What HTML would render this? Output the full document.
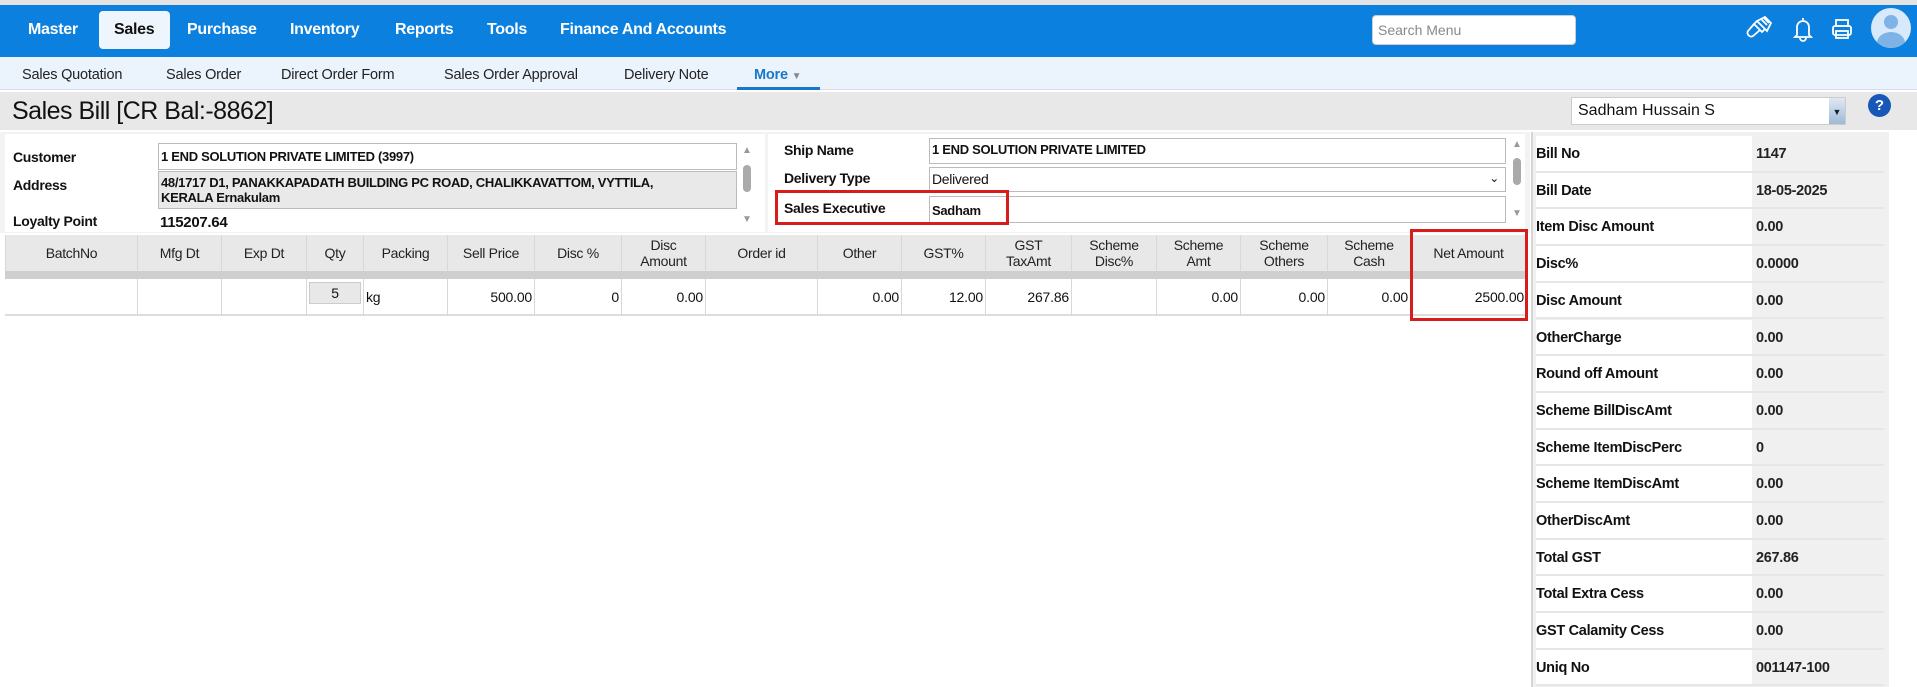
<!DOCTYPE html>
<html><head><meta charset="utf-8"><style>
*{box-sizing:border-box;margin:0;padding:0}
body{width:1917px;height:687px;overflow:hidden;background:#fff;font-family:"Liberation Sans",sans-serif;position:relative;color:#111}
.a{position:absolute}
.nav{left:0;top:5px;width:1917px;height:52px;background:#0b80df}
.ni{top:21px;color:#fff;font-weight:bold;font-size:16px;letter-spacing:-0.3px}
.sub{left:0;top:57px;width:1917px;height:33px;background:#ebf4fc;border-bottom:1px solid #d7dde3}
.si{top:67px;font-size:14.5px;color:#222;letter-spacing:-0.2px}
.lbl{font-size:14px;font-weight:bold;letter-spacing:-0.3px}
.inp{background:#fff;border:1px solid #bbb;font-size:13px;font-weight:bold;padding:3px 2px;letter-spacing:-0.3px}
.th{top:235px;left:5px;height:36px;width:1521px;background:#e8e8e8}
.hc{position:absolute;top:235px;height:36px;display:flex;align-items:center;justify-content:center;text-align:center;font-size:14px;line-height:16px;color:#222;border-left:1px solid #d8d8d8;letter-spacing:-0.3px}
.dc{position:absolute;top:279px;height:36px;display:flex;align-items:center;justify-content:flex-end;padding-right:2px;font-size:14px;border-left:1px solid #d8d8d8;letter-spacing:-0.2px}
.rp{left:1531px;top:132px;width:358px;height:555px;background:#f0f0f0;border-left:2px solid #d6d6d6}
.row{position:absolute;left:1536px;width:348px;height:36.7px;border-bottom:2px solid #e6e6e6;font-size:14.5px;font-weight:bold;letter-spacing:-0.3px}
.row span{position:absolute;top:10px}
.row .l{left:0;width:216px;height:100%;background:#fff;top:0;padding-top:10px}
.row .v{left:220px;font-weight:bold;color:#222}
</style></head><body>
<div class="a" style="left:0;top:0;width:1917px;height:5px;background:#e3e3e3"></div>
<div class="a nav"></div>
<div class="a" style="left:99px;top:11px;width:71px;height:38px;background:#eef5fc;border-radius:4px"></div>
<div class="a ni" style="left:28px">Master</div>
<div class="a ni" style="left:114px;color:#111">Sales</div>
<div class="a ni" style="left:187px">Purchase</div>
<div class="a ni" style="left:290px">Inventory</div>
<div class="a ni" style="left:395px">Reports</div>
<div class="a ni" style="left:487px">Tools</div>
<div class="a ni" style="left:560px">Finance And Accounts</div>
<div class="a" style="left:1372px;top:15px;width:204px;height:30px;background:#fff;border-radius:4px;border:1px solid #ccc;font-size:14px;color:#888;padding:6px 5px">Search Menu</div>
<svg class="a" style="left:1745px;top:15px" width="28" height="28" viewBox="0 0 28 28" fill="none" stroke="#fff" stroke-width="1.8"><path d="M12 6l8-4 6 6-4 8zM12 6l10 10M16 4l6 6M19 3l5 5M12 6l-3 3 8 8 3-3M9 9l-6 7c-2 3 2 7 5 5l7-6"/></svg>
<svg class="a" style="left:1791px;top:15px" width="24" height="28" viewBox="0 0 24 28" fill="none" stroke="#fff" stroke-width="1.8"><path d="M12 3v2M6 20V12a6 6 0 0 1 12 0v8l2 2H4zM9 23a3 3 0 0 0 6 0"/></svg>
<svg class="a" style="left:1830px;top:17px" width="24" height="24" viewBox="0 0 24 24" fill="none" stroke="#fff" stroke-width="1.8"><rect x="6" y="3" width="12" height="6"/><rect x="3" y="9" width="18" height="9" rx="2"/><rect x="6" y="14" width="12" height="7"/></svg>
<div class="a" style="left:1871px;top:8px;width:40px;height:40px;border-radius:50%;background:#d7e9fa;overflow:hidden"><div class="a" style="left:13px;top:7px;width:14px;height:14px;border-radius:50%;background:#7fb3e6"></div><div class="a" style="left:6px;top:24px;width:28px;height:22px;border-radius:50%;background:#7fb3e6"></div></div>
<div class="a sub"></div>
<div class="a si" style="left:22px">Sales Quotation</div>
<div class="a si" style="left:166px">Sales Order</div>
<div class="a si" style="left:281px">Direct Order Form</div>
<div class="a si" style="left:444px">Sales Order Approval</div>
<div class="a si" style="left:624px">Delivery Note</div>
<div class="a si" style="left:754px;color:#1a78c9;font-weight:bold">More <span style="font-size:10px;color:#888">▼</span></div>
<div class="a" style="left:737px;top:87px;width:83px;height:3px;background:#1a78c9"></div>
<div class="a" style="left:0;top:92px;width:1917px;height:38px;background:#e8e8e8"></div>
<div class="a" style="left:12px;top:97px;font-size:25px;color:#111;letter-spacing:-0.5px">Sales Bill [CR Bal:-8862]</div>
<div class="a" style="left:1571px;top:97px;width:275px;height:28px;background:#fff;border:1px solid #ccc;font-size:16px;padding:4px 6px">Sadham Hussain S</div>
<div class="a" style="left:1829px;top:98px;width:16px;height:26px;background:linear-gradient(#dfe9f3,#9dbad6);font-size:9px;text-align:center;padding-top:9px;color:#123">▼</div>
<div class="a" style="left:1868px;top:94px;width:23px;height:23px;border-radius:50%;background:#1657b8;color:#fff;font-weight:bold;font-size:15px;text-align:center;line-height:23px">?</div>
<div class="a" style="left:0;top:132px;width:1530px;height:101px;background:#f3f3f3"></div>
<div class="a" style="left:5px;top:134px;width:760px;height:98px;background:#fff"></div>
<div class="a lbl" style="left:13px;top:149px">Customer</div>
<div class="a lbl" style="left:13px;top:177px">Address</div>
<div class="a lbl" style="left:13px;top:213px">Loyalty Point</div>
<div class="a inp" style="left:158px;top:143px;width:579px;height:27px;padding-top:5px">1 END SOLUTION PRIVATE LIMITED (3997)</div>
<div class="a inp" style="left:158px;top:171px;width:579px;height:38px;background:#e9e9e9;line-height:15px;padding-top:3px">48/1717 D1, PANAKKAPADATH BUILDING PC ROAD, CHALIKKAVATTOM, VYTTILA,<br>KERALA Ernakulam</div>
<div class="a" style="left:160px;top:214px;font-size:15px;font-weight:bold;letter-spacing:-0.3px">115207.64</div>
<div class="a" style="left:742px;top:145px;font-size:10px;color:#999">▲</div>
<div class="a" style="left:743px;top:165px;width:8px;height:27px;border-radius:4px;background:#aaa"></div>
<div class="a" style="left:742px;top:214px;font-size:10px;color:#999">▼</div>
<div class="a" style="left:768px;top:134px;width:757px;height:98px;background:#fff"></div>
<div class="a lbl" style="left:784px;top:142px">Ship Name</div>
<div class="a lbl" style="left:784px;top:170px">Delivery Type</div>
<div class="a lbl" style="left:784px;top:200px">Sales Executive</div>
<div class="a inp" style="left:929px;top:138px;width:577px;height:26px">1 END SOLUTION PRIVATE LIMITED</div>
<div class="a inp" style="left:929px;top:167px;width:577px;height:25px;font-weight:normal;font-size:14px">Delivered<span style="position:absolute;right:6px;top:3px;font-size:12px">⌄</span></div>
<div class="a inp" style="left:929px;top:196px;width:577px;height:27px;padding-top:6px">Sadham</div>
<div class="a" style="left:775px;top:190px;width:234px;height:35px;border:3px solid #d71c1c"></div>
<div class="a" style="left:1512px;top:139px;font-size:10px;color:#999">▲</div>
<div class="a" style="left:1513px;top:158px;width:8px;height:27px;border-radius:4px;background:#aaa"></div>
<div class="a" style="left:1512px;top:208px;font-size:10px;color:#999">▼</div>
<div class="a th"></div>
<div class="a" style="left:5px;top:271px;width:1521px;height:8px;background:#cfcfcf"></div>
<div class="a" style="left:5px;top:314px;width:1521px;height:2px;background:#ddd"></div>
<div class="hc" style="left:5px;width:132px">BatchNo</div>
<div class="hc" style="left:137px;width:84px">Mfg Dt</div>
<div class="hc" style="left:221px;width:85px">Exp Dt</div>
<div class="hc" style="left:306px;width:57px">Qty</div>
<div class="hc" style="left:363px;width:84px">Packing</div>
<div class="hc" style="left:447px;width:87px">Sell Price</div>
<div class="hc" style="left:534px;width:87px">Disc %</div>
<div class="hc" style="left:621px;width:84px">Disc<br>Amount</div>
<div class="hc" style="left:705px;width:112px">Order id</div>
<div class="hc" style="left:817px;width:84px">Other</div>
<div class="hc" style="left:901px;width:84px">GST%</div>
<div class="hc" style="left:985px;width:86px">GST<br>TaxAmt</div>
<div class="hc" style="left:1071px;width:85px">Scheme<br>Disc%</div>
<div class="hc" style="left:1156px;width:84px">Scheme<br>Amt</div>
<div class="hc" style="left:1240px;width:87px">Scheme<br>Others</div>
<div class="hc" style="left:1327px;width:83px">Scheme<br>Cash</div>
<div class="hc" style="left:1410px;width:116px">Net Amount</div>
<div class="dc" style="left:5px;width:132px;border:0"></div>
<div class="dc" style="left:137px;width:84px"></div>
<div class="dc" style="left:221px;width:85px"></div>
<div class="dc" style="left:306px;width:57px"><div style="width:52px;height:22px;background:#e8e8e8;border:1px solid #ccc;text-align:center;margin-top:-8px;padding-top:2px">5</div></div>
<div class="dc" style="left:363px;width:84px;justify-content:flex-start;padding-left:2px">kg</div>
<div class="dc" style="left:447px;width:87px">500.00</div>
<div class="dc" style="left:534px;width:87px">0</div>
<div class="dc" style="left:621px;width:84px">0.00</div>
<div class="dc" style="left:705px;width:112px"></div>
<div class="dc" style="left:817px;width:84px">0.00</div>
<div class="dc" style="left:901px;width:84px">12.00</div>
<div class="dc" style="left:985px;width:86px">267.86</div>
<div class="dc" style="left:1071px;width:85px"></div>
<div class="dc" style="left:1156px;width:84px">0.00</div>
<div class="dc" style="left:1240px;width:87px">0.00</div>
<div class="dc" style="left:1327px;width:83px">0.00</div>
<div class="dc" style="left:1410px;width:116px">2500.00</div>
<div class="a" style="left:1410px;top:229px;width:118px;height:92px;border:3px solid #d71c1c"></div>
<div class="a rp"></div>
<div class="row" style="top:136px"><span class="l">Bill No</span><span class="v">1147</span></div>
<div class="row" style="top:172.7px"><span class="l">Bill Date</span><span class="v">18-05-2025</span></div>
<div class="row" style="top:209.4px"><span class="l">Item Disc Amount</span><span class="v">0.00</span></div>
<div class="row" style="top:246.1px"><span class="l">Disc%</span><span class="v">0.0000</span></div>
<div class="row" style="top:282.8px"><span class="l">Disc Amount</span><span class="v">0.00</span></div>
<div class="row" style="top:319.5px"><span class="l">OtherCharge</span><span class="v">0.00</span></div>
<div class="row" style="top:356.2px"><span class="l">Round off Amount</span><span class="v">0.00</span></div>
<div class="row" style="top:392.9px"><span class="l">Scheme BillDiscAmt</span><span class="v">0.00</span></div>
<div class="row" style="top:429.6px"><span class="l">Scheme ItemDiscPerc</span><span class="v">0</span></div>
<div class="row" style="top:466.3px"><span class="l">Scheme ItemDiscAmt</span><span class="v">0.00</span></div>
<div class="row" style="top:503px"><span class="l">OtherDiscAmt</span><span class="v">0.00</span></div>
<div class="row" style="top:539.7px"><span class="l">Total GST</span><span class="v">267.86</span></div>
<div class="row" style="top:576.4px"><span class="l">Total Extra Cess</span><span class="v">0.00</span></div>
<div class="row" style="top:613.1px"><span class="l">GST Calamity Cess</span><span class="v">0.00</span></div>
<div class="row" style="top:649.8px"><span class="l">Uniq No</span><span class="v">001147-100</span></div>
</body></html>
